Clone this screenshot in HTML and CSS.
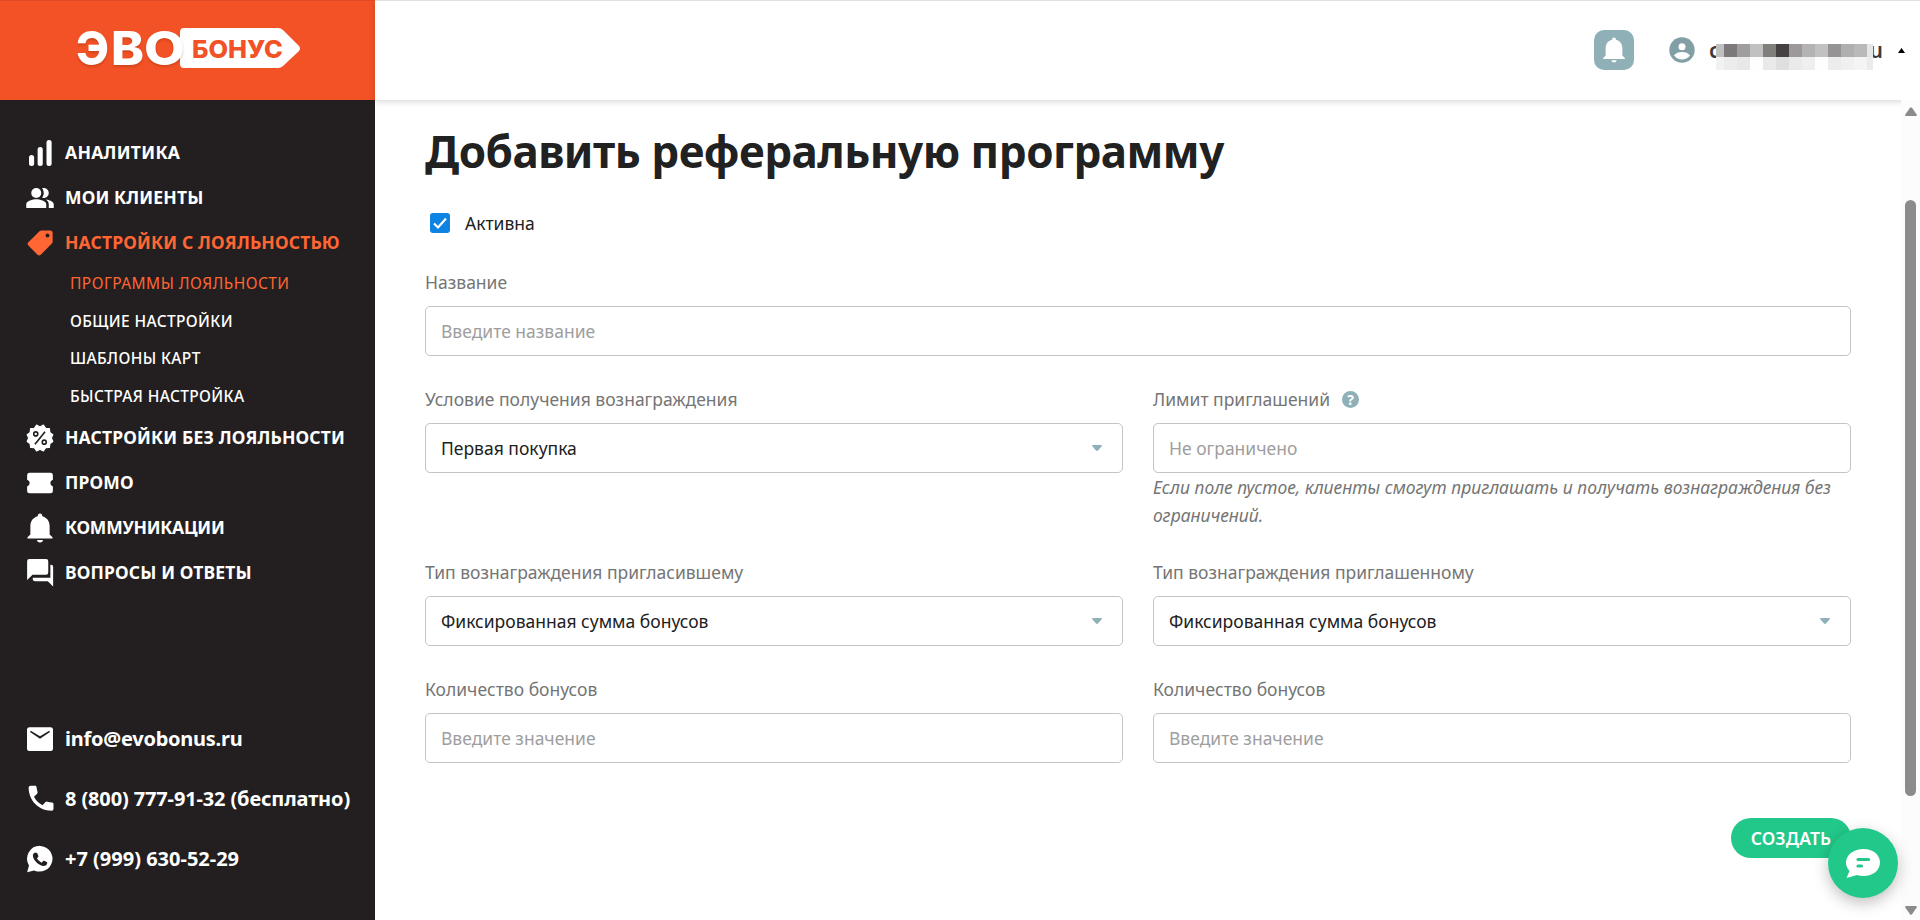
FILE: index.html
```html
<!DOCTYPE html>
<html lang="ru">
<head>
    <meta charset="UTF-8">
    <meta name="viewport" content="width=device-width, initial-scale=1.0">
    <title>Эвобонус</title>
    <link rel="stylesheet" href="styles.css">
</head>
<body>
    <div class="sidebar">
        <a class="logo" href="#">
            <svg width="226" height="70" viewBox="0 -14 226 70">
                <g class="logo-evo">
                    <text x="0" y="39" textLength="33" lengthAdjust="spacingAndGlyphs">Э</text>
                    <text x="35" y="39" textLength="33" lengthAdjust="spacingAndGlyphs">В</text>
                </g>
                <path class="logo-tag" d="M108 2h94q3 0 5 2l16 16q2 2.500 0 5l-16 15q-2 2-5 2h-94q-4 0-4-4V6q0-4 4-4z"/>
                <g class="logo-evo">
                    <text x="68" y="39" textLength="41" lengthAdjust="spacingAndGlyphs">О</text>
                </g>
                <text class="logo-bonus" x="116" y="32" textLength="91" lengthAdjust="spacingAndGlyphs">БОНУС</text>
            </svg>
        </a>

        <!-- Main menu -->
        <nav class="menu">
            <a class="menu-item" href="#">
                <svg class="icon" viewBox="0 0 24 24"><rect x="3.200" y="13.500" width="4.100" height="8.900" rx="2"/><rect x="10.100" y="7.200" width="4.100" height="15.200" rx="2"/><rect x="17.200" y="1.500" width="4.100" height="20.900" rx="2"/></svg>
                <span class="wide">Аналитика</span>
            </a>
            <a class="menu-item" href="#">
                <svg class="icon" viewBox="0 0 24 24"><path d="M16.670 13.130C18.040 14.060 19 15.320 19 17v3h4v-3c0-2.180-3.570-3.470-6.330-3.870z"/><circle cx="9" cy="8" r="4"/><path d="M15 12c2.210 0 4-1.790 4-4s-1.790-4-4-4c-.47 0-.91.1-1.330.240C14.500 5.270 15 6.580 15 8s-.5 2.730-1.330 3.760c.42.140.860.240 1.330.240zM9 13c-2.670 0-8 1.340-8 4v3h16v-3c0-2.660-5.330-4-8-4z"/></svg>
                <span>Мои клиенты</span>
            </a>
            <a class="menu-item active" href="#">
                <svg class="icon" viewBox="0 0 24 24"><path d="M2.700 11.300 11.600 2.500q.7-.6 1.600-.6h6.900q2 0 2 2v7q0 .9-.6 1.500l-8.900 9q-1.300 1.200-2.600 0l-7.300-7.400q-1.200-1.300 0-2.700zM18 4.400a1.600 1.600 0 1 0 0 3.200 1.600 1.600 0 0 0 0-3.200z"/></svg>
                <span>Настройки с лояльностью</span>
            </a>
            <div class="submenu">
                <a class="active" href="#">Программы лояльности</a>
                <a href="#">Общие настройки</a>
                <a href="#">Шаблоны карт</a>
                <a href="#">Быстрая настройка</a>
            </div>
            <a class="menu-item" href="#">
                <svg class="icon" viewBox="0 0 24 24"><path d="M12 3.200 14.700 1.700 16.500 4.300 19.500 4.500 19.800 7.600 22.200 9.400 21 12l1.200 2.700-2.400 1.800-.3 3-3 .2-1.800 2.600L12 20.900l-2.700 1.400-1.800-2.600-3-.2-.3-3-2.400-1.800L3 12 1.800 9.400l2.400-1.800.3-3.100 3-.2 1.800-2.600z" stroke="currentColor" stroke-linejoin="round"/><g class="cut"><circle cx="8.600" cy="8.700" r="1.600"/><circle cx="15.400" cy="15.300" r="1.600"/><path d="M16 7 8 17"/></g></svg>
                <span>Настройки без лояльности</span>
            </a>
            <a class="menu-item" href="#">
                <svg class="icon" viewBox="0 0 24 24"><path d="M3.700 3.800h16.600q2 0 2 2v3.500a2.800 2.800 0 0 0 0 5.400v3.500q0 2-2 2H3.700q-2 0-2-2v-3.500a2.800 2.800 0 0 0 0-5.400V5.800q0-2 2-2z"/></svg>
                <span>Промо</span>
            </a>
            <a class="menu-item" href="#">
                <svg class="icon" viewBox="0 0 24 24"><path d="M9.500 21.500h5q-.5 2-2.500 2t-2.500-2zM12 .4q1.800 0 1.800 2.100c3.900 1 5.900 4 5.900 8v6.600l2.300 2.200v1H2v-1l2.300-2.200v-6.600c0-4 2-7 5.900-8q0-2.100 1.800-2.100z"/></svg>
                <span class="narrow">Коммуникации</span>
            </a>
            <a class="menu-item" href="#">
                <svg class="icon" viewBox="0 0 24 24"><path d="M3.500 .8h13.300q1.800 0 1.800 1.800v8.900q0 1.800-1.800 1.800H6l-4.300 4.200V2.600q0-1.800 1.800-1.800zM20.300 5.300h.5q1.700 0 1.700 1.800V22.800l-4.300-4.300H8q-1.800 0-1.800-1.800v-.9h14.100z"/></svg>
                <span>Вопросы и ответы</span>
            </a>
        </nav>

        <!-- Contacts -->
        <div class="contacts">
            <a href="#">
                <svg class="icon" viewBox="0 0 24 24"><path d="M3.600 2.500h16.800q2 0 2 2v15q0 2-2 2H3.600q-2 0-2-2v-15q0-2 2-2zM4.600 5.400 4 6.400l8 5.300 8-5.300-.6-1L12 9.700z"/></svg>
                <span class="mail">info@evobonus.ru</span>
            </a>
            <a href="#">
                <svg class="icon" viewBox="0 0 24 24"><path d="M4.500 1.300h3.600q1 0 1.100 1.100.2 2 .8 3.800.3.900-.3 1.500L7.200 10.100c1.600 3 3.800 5.200 6.800 6.800l2.400-2.500q.6-.6 1.500-.3 1.800.6 3.800.7 1.100.1 1.100 1.200v3.800q0 1.500-1.500 1.500C11 21.300 3 13.500 2.900 2.800q0-1.500 1.600-1.500z"/></svg>
                <span class="phone">8 (800) 777-91-32 (бесплатно)</span>
            </a>
            <a href="#">
                <svg class="icon" viewBox="0 0 24 24"><path d="M12.200 1.500a10.300 10.300 0 1 1-4.900 19.600L1.700 22.500l1.500-5.300A10.300 10.300 0 0 1 12.200 1.500z"/><path class="cut-fill" d="M7.500 7h1.600q.5 0 .8.600l.8 1.900q.2.500-.2.900l-.9 1c.9 1.700 2.100 2.700 3.800 3.500l1.100-1.300q.4-.4.900-.2l2 .9q.5.300.4.900-.3 2.400-3.300 2.300C10.500 17 6.500 12.700 6.300 9.200Q6.300 7.800 7.500 7z"/></svg>
                <span>+7 (999) 630-52-29</span>
            </a>
        </div>
    </div>

    <div class="content">
        <header class="header">
            <a class="bell" href="#">
                <svg viewBox="0 0 24 24"><path d="M9.500 21.500h5q-.5 2-2.500 2t-2.500-2zM12 .4q1.800 0 1.800 2.100c3.900 1 5.900 4 5.900 8v6.600l2.300 2.200v1H2v-1l2.300-2.200v-6.600c0-4 2-7 5.900-8q0-2.100 1.800-2.100z"/></svg>
            </a>
            <svg class="avatar" viewBox="0 0 26 26"><circle cx="13" cy="13" r="12.700"/><circle cx="13" cy="9.700" r="3.500" fill="#fff"/><path d="M5 18.500c3-4.600 13-4.600 16 0-4 5.300-12 5.300-16 0z" fill="#fff"/></svg>
            <div class="user">
                <span>c</span>
                <svg class="mask" width="157" height="26" shape-rendering="crispEdges">
                    <g>
                        <rect width="8" height="13" fill="#c0c0c0"/><rect x="8" width="13" height="13" fill="#7d797a"/>
                        <rect x="21" width="13" height="13" fill="#a09d9e"/><rect x="34" width="13" height="13" fill="#c1c1c1"/>
                        <rect x="47" width="13" height="13" fill="#807f7c"/><rect x="60" width="13" height="13" fill="#464142"/>
                        <rect x="73" width="13" height="13" fill="#9d999b"/><rect x="86" width="13" height="13" fill="#b3b3b3"/>
                        <rect x="99" width="13" height="13" fill="#c1c1c1"/><rect x="112" width="13" height="13" fill="#969394"/>
                        <rect x="125" width="13" height="13" fill="#afafaf"/><rect x="138" width="13" height="13" fill="#b9b9b9"/>
                        <rect x="151" width="6" height="13" fill="#e6e6e6"/>
                    </g>
                    <g transform="translate(0 13)">
                        <rect width="8" height="13" fill="#f2f2f2"/><rect x="8" width="13" height="13" fill="#ececec"/>
                        <rect x="21" width="13" height="13" fill="#e8e8e8"/><rect x="34" width="13" height="13" fill="#fefefe"/>
                        <rect x="47" width="13" height="13" fill="#e9e9e9"/><rect x="60" width="13" height="13" fill="#dfdfdf"/>
                        <rect x="73" width="13" height="13" fill="#eaeaea"/><rect x="86" width="13" height="13" fill="#efefef"/>
                        <rect x="99" width="13" height="13" fill="#fefefe"/><rect x="112" width="13" height="13" fill="#ececec"/>
                        <rect x="125" width="13" height="13" fill="#f0f0f0"/><rect x="138" width="13" height="13" fill="#f4f4f4"/>
                        <rect x="151" width="6" height="13" fill="#ebebeb"/>
                    </g>
                </svg>
                <span>u</span>
            </div>
            <svg class="caret" viewBox="0 0 7 5"><path d="M0 5 3.500 0 7 5z"/></svg>
        </header>

        <div class="page">
            <form class="form">
                <h1>Добавить реферальную программу</h1>

                <label class="check">
                    <span class="box"><svg viewBox="0 0 20 20"><path d="M4 10.500 8 14.500 16 5.500"/></svg></span>
                    Активна
                </label>

                <div class="field">
                    <label>Название</label>
                    <input type="text" placeholder="Введите название">
                </div>

                <div class="row">
                    <div class="field">
                        <label>Условие получения вознаграждения</label>
                        <div class="select">Первая покупка<svg viewBox="0 0 10 6"><path d="M1 0h8q1.500.5.500 1.500L6 5.500q-1 .8-2 0L.5 1.500Q-.5.500 1 0z"/></svg></div>
                    </div>
                    <div class="field">
                        <label>Лимит приглашений <span class="help">?</span></label>
                        <input type="text" placeholder="Не ограничено">
                        <p class="hint">Если поле пустое, клиенты смогут приглашать и получать вознаграждения без ограничений.</p>
                    </div>
                </div>

                <div class="row">
                    <div class="field">
                        <label>Тип вознаграждения пригласившему</label>
                        <div class="select">Фиксированная сумма бонусов<svg viewBox="0 0 10 6"><path d="M1 0h8q1.500.5.500 1.500L6 5.500q-1 .8-2 0L.5 1.500Q-.5.500 1 0z"/></svg></div>
                    </div>
                    <div class="field">
                        <label>Тип вознаграждения приглашенному</label>
                        <div class="select">Фиксированная сумма бонусов<svg viewBox="0 0 10 6"><path d="M1 0h8q1.500.5.500 1.500L6 5.500q-1 .8-2 0L.5 1.500Q-.5.500 1 0z"/></svg></div>
                    </div>
                </div>

                <div class="row">
                    <div class="field">
                        <label>Количество бонусов</label>
                        <input type="text" placeholder="Введите значение">
                    </div>
                    <div class="field">
                        <label>Количество бонусов</label>
                        <input type="text" placeholder="Введите значение">
                    </div>
                </div>

                <button class="submit" type="button">Создать</button>
            </form>

            <div class="scrollbar">
                <svg viewBox="0 0 12 9"><path d="M5 .8q1-1.300 2 0l4.700 6.700q.5 1.500-1 1.500H1.300q-1.500 0-1-1.500z"/></svg>
                <div class="thumb"></div>
                <svg viewBox="0 0 12 9"><path d="M5 8.200q1 1.300 2 0l4.700-6.700q.5-1.500-1-1.500H1.300q-1.500 0-1 1.500z"/></svg>
            </div>
        </div>
    </div>

    <!-- Chat widget -->
    <a class="chat" href="#">
        <svg viewBox="0 0 34 29"><path d="M17.500 0C27 0 34 5.800 34 13.500S27 27 17.500 27q-3.500 0-6.500-1L.5 29l3-7Q0 18 0 13.500C0 5.800 8 0 17.500 0z" fill="#fff"/><path d="M12 10.500h10.500M12 17h3.500" stroke="#22c88a" stroke-width="3.200" stroke-linecap="round"/></svg>
    </a>
</body>
</html>
```
FILE: styles.css
```css
/* General body styling */
* {
    box-sizing: border-box;
}

body {
    margin: 0;
    height: 920px;
    display: flex;
    overflow: hidden;
    font-family: 'Noto Sans', sans-serif;
    font-size: 17.5px;
    color: #212121;
    background-color: #fff;
}

a {
    color: inherit;
    text-decoration: none;
}

svg {
    display: block;
    flex-shrink: 0;
}

/* Sidebar */
.sidebar {
    width: 375px;
    flex-shrink: 0;
    display: flex;
    flex-direction: column;
    background-color: #231f20;
    color: #fff;
}

.logo {
    height: 100px;
    padding: 11px 0 0 76px;
    background-color: #f25225;
    border-top: 1px solid #dc4d26;
}

.logo-evo {
    font: 800 46px 'Inter', sans-serif;
    fill: #fff;
    filter: drop-shadow(0 2px 1px rgba(120, 30, 0, 0.25));
}

.logo-tag {
    fill: #fff;
}

.logo-bonus {
    font: 800 25px 'Inter', sans-serif;
    fill: #f25225;
}

.menu {
    padding: 30px 25px 0;
    text-transform: uppercase;
}

.menu-item,
.contacts a {
    display: flex;
    align-items: center;
    gap: 10px;
    height: 45px;
    font-weight: 700;
    letter-spacing: 0.15px;
    white-space: nowrap;
}

.menu-item span,
.contacts span {
    margin-top: -2px;
}

.menu-item .wide {
    letter-spacing: 0.3px;
}

.menu-item .narrow {
    letter-spacing: -0.25px;
}

.menu .active {
    color: #ff6633;
}

.icon {
    width: 30px;
    height: 30px;
    fill: currentColor;
}

.cut {
    fill: none;
    stroke: #231f20;
    stroke-width: 1.3;
}

.cut-fill {
    fill: #231f20;
}

.submenu {
    display: flex;
    flex-direction: column;
    padding-left: 45px;
    font-size: 15.5px;
    line-height: 37.5px;
    font-weight: 500;
    letter-spacing: 0.37px;
}

.submenu .active {
    font-weight: 400;
    letter-spacing: 0.45px;
}

.contacts {
    margin-top: auto;
    padding: 0 25px 31px;
    font-size: 20px;
}

.contacts a {
    height: 60px;
    letter-spacing: 0;
}

.contacts .mail {
    letter-spacing: -0.25px;
}

.contacts .phone {
    letter-spacing: -0.13px;
}

/* Header */
.content {
    flex: 1;
    display: flex;
    flex-direction: column;
}

.header {
    height: 100px;
    flex-shrink: 0;
    display: flex;
    align-items: center;
    justify-content: flex-end;
    padding: 0 15px 1px 0;
    border-top: 1px solid #e0e0e0;
    box-shadow: 0 2px 6px rgba(0, 0, 0, 0.15);
}

.bell {
    width: 40px;
    height: 40px;
    margin-right: 35px;
    display: flex;
    align-items: center;
    justify-content: center;
    border-radius: 10px;
    background-color: #90b0b8;
}

.bell svg {
    width: 26px;
    height: 26px;
    fill: #fff;
}

.avatar {
    width: 26px;
    height: 26px;
    margin-right: 14px;
    fill: #829fa6;
}

.user {
    width: 174px;
    height: 33px;
    margin-top: 7px;
    display: flex;
    justify-content: space-between;
    font-size: 21px;
    font-weight: 600;
    line-height: 26px;
    color: #3f3a3b;
}

/* Covers the inner halves of the first and last letters */
.mask {
    position: relative;
    margin: 7px -10px 0;
}

.caret {
    width: 7px;
    height: 5px;
    margin-left: 15px;
}

/* Form */
.page {
    flex: 1;
    display: flex;
}

.form {
    flex: 1;
    padding: 21px 50px 0;
    display: flex;
    flex-direction: column;
}

h1 {
    margin: 0;
    font-size: 44px;
    line-height: 60px;
    font-weight: 700;
    letter-spacing: -0.5px;
    white-space: nowrap;
}

.check {
    display: flex;
    align-items: center;
    gap: 15px;
    height: 28px;
    margin: 28px 0 31px 5px;
}

.box {
    width: 20px;
    height: 20px;
    border-radius: 3px;
    background-color: #0d84e3;
}

.box svg {
    fill: none;
    stroke: #fff;
    stroke-width: 2.2;
}

.row {
    display: grid;
    grid-template-columns: 1fr 1fr;
    gap: 30px;
}

.field {
    display: flex;
    flex-direction: column;
    margin-bottom: 29px;
}

.field label {
    display: flex;
    align-items: center;
    height: 28px;
    margin-bottom: 10px;
    color: #757575;
}

.field input,
.select {
    height: 50px;
    padding: 0 15px;
    font: inherit;
    border: 1px solid #c4c4c4;
    border-radius: 5px;
    background-color: #fff;
}

.field input::placeholder {
    color: #9e9e9e;
}

.select {
    display: flex;
    align-items: center;
    justify-content: space-between;
    padding-right: 20px;
}

.select svg {
    width: 10px;
    height: 6px;
    fill: #90b0b8;
}

.help {
    width: 17px;
    height: 17px;
    margin-left: 12px;
    border-radius: 50%;
    background-color: #90b0b8;
    color: #fff;
    font-size: 14px;
    font-weight: 700;
    line-height: 17px;
    text-align: center;
}

.hint {
    margin: 0;
    font-style: italic;
    line-height: 28px;
    color: #757575;
}

.submit {
    align-self: flex-end;
    width: 120px;
    height: 40px;
    margin-top: 26px;
    padding: 0;
    border: none;
    border-radius: 20px;
    background-color: #22c88a;
    color: #fff;
    font: 600 17.5px 'Noto Sans', sans-serif;
    letter-spacing: 0.2px;
    text-transform: uppercase;
}

/* Scrollbar */
.scrollbar {
    width: 19px;
    display: flex;
    flex-direction: column;
    align-items: center;
    padding: 7px 0 5px;
    background-color: #fcfcfc;
}

.scrollbar svg {
    width: 12px;
    height: 9px;
    fill: #8b8b8b;
}

.thumb {
    width: 11px;
    height: 596px;
    margin: 84px 0 auto;
    border-radius: 6px;
    background-color: #8b8b8b;
}

/* Chat widget */
.chat {
    position: fixed;
    right: 22px;
    bottom: 22px;
    width: 70px;
    height: 70px;
    display: flex;
    align-items: center;
    justify-content: center;
    border-radius: 50%;
    background-color: #22c88a;
    box-shadow: 0 5px 15px rgba(0, 0, 0, 0.25);
}

.chat svg {
    width: 34px;
    height: 29px;
}
```
